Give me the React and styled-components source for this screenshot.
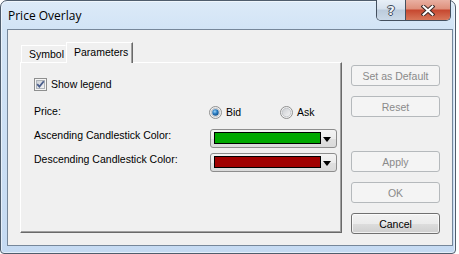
import React from "react";
import styled, { createGlobalStyle } from "styled-components";

const GlobalStyle = createGlobalStyle`
  html, body { margin: 0; padding: 0; background: #fff; }
  body {
    width: 459px;
    height: 254px;
    overflow: hidden;
    font-family: "Liberation Sans", Arial, sans-serif;
  }
`;

// 창 틀
const Window = styled.div`
  width: 456px;
  height: 254px;
  box-sizing: border-box;
  display: flex;
  flex-direction: column;
  padding: 0 2px 7px 6px;
  border: 1px solid #4f5d6d;
  border-radius: 7px 7px 4px 4px;
  background: linear-gradient(to bottom, #dceaf8 0, #d2e4f6 28px, #c5daf2 100%);
  box-shadow: inset 0 0 0 1px rgba(255, 255, 255, 0.55);
`;
const TitleBar = styled.div`
  height: 28px;
  display: flex;
  justify-content: space-between;
  align-items: flex-start;
`;
const Title = styled.div`
  padding: 7px 0 0 1px;
  font-family: "Open Sans", "Noto Sans", sans-serif;
  font-size: 12px;
  line-height: 16px;
  color: #000;
`;
const CaptionGroup = styled.div`
  display: flex;
  margin: -1px 2px 0 0;
  height: 20px;
  border: 1px solid #44505f;
  border-top: none;
  border-radius: 0 0 5px 5px;
  overflow: hidden;
`;
const CaptionButton = styled.div`
  width: ${({ $w }) => $w}px;
  display: flex;
  align-items: center;
  justify-content: center;
  background: ${({ $close }) =>
    $close
      ? "linear-gradient(to bottom, #e9b0a2 0, #de8f7b 45%, #c6472f 50%, #d8775a 100%)"
      : "linear-gradient(to bottom, #e8eff7 0, #d6e1ed 45%, #bccbdc 50%, #cbd9e8 100%)"};
  & + & {
    border-left: 1px solid #44505f;
  }
`;
const HelpGlyph = styled.span`
  font-family: "DejaVu Sans", sans-serif;
  font-weight: bold;
  font-size: 13px;
  line-height: 13px;
  color: #eef2f7;
  text-shadow: 1px 0 0 #3e4a5a, -1px 0 0 #3e4a5a, 0 1px 0 #3e4a5a, 0 -1px 0 #3e4a5a;
`;

// 본문
const Client = styled.div`
  height: 217px;
  box-sizing: border-box;
  display: flex;
  gap: 9px;
  padding: 12px 12px 0 12px;
  border: 1px solid #76879a;
  background: #f0f0f0;
  font-size: 10.5px;
  color: #000;
`;
const TabControl = styled.div`
  width: 322px;
  display: flex;
  flex-direction: column;
`;
const TabStrip = styled.div`
  height: 20px;
  display: flex;
  align-items: flex-start;
  padding-left: 1px;
  position: relative;
  z-index: 1;
`;
const Tab = styled.div`
  width: ${({ $w }) => $w}px;
  height: ${({ $active }) => ($active ? 21 : 17)}px;
  margin-top: ${({ $active }) => ($active ? 0 : 3)}px;
  box-sizing: border-box;
  padding-left: 7px;
  line-height: ${({ $active }) => ($active ? 19 : 16)}px;
  background: #f0f0f0;
  border-top: 1px solid #fff;
  border-left: 1px solid #fff;
  border-right: 1px solid ${({ $active }) => ($active ? "#696969" : "transparent")};
  box-shadow: ${({ $active }) => ($active ? "inset -1px 0 0 #a0a0a0" : "none")};
`;
const Panel = styled.div`
  height: 171px;
  box-sizing: border-box;
  display: flex;
  flex-direction: column;
  padding: 15px 0 0 13px;
  border-top: 1px solid #fff;
  border-left: 1px solid #fff;
  border-right: 1px solid #696969;
  border-bottom: 1px solid #696969;
  box-shadow: inset -1px -1px 0 #a0a0a0;
`;
const Row = styled.div`
  display: grid;
  grid-template-columns: 175px auto;
  align-items: start;
  margin-top: ${({ $gap }) => $gap || 0}px;
`;
const Label = styled.div`
  line-height: 13px;
  white-space: nowrap;
`;
const Check = styled.label`
  grid-column: 1 / 3;
  display: flex;
  align-items: center;
  gap: 4px;
  line-height: 13px;
`;
const Radios = styled.div`
  display: flex;
  padding-top: 1px;
`;
const RadioItem = styled.div`
  width: ${({ $w }) => $w}px;
  display: flex;
  align-items: center;
  gap: 4px;
  line-height: 13px;
`;
const ColorSelect = styled.div`
  width: 127px;
  height: 19px;
  margin-left: 1px;
  box-sizing: border-box;
  display: flex;
  align-items: flex-start;
  padding: 2px 0 0 3px;
  border: 1px solid #8d8d8d;
  border-radius: 3px;
  background: linear-gradient(to bottom, #f4f4f4 0, #ececec 50%, #e0e0e0 51%, #dadada 100%);
`;
const Swatch = styled.div`
  width: 107px;
  height: 12px;
  box-sizing: border-box;
  border: 1px solid #000;
  background: ${({ $color }) => $color};
`;
const Arrow = styled.div`
  margin: 5px 0 0 2px;
  width: 0;
  height: 0;
  border-left: 4.5px solid transparent;
  border-right: 4.5px solid transparent;
  border-top: 5px solid #000;
`;
const ButtonColumn = styled.div`
  width: 89px;
  display: flex;
  flex-direction: column;
  padding-top: 23px;
`;
const Button = styled.div`
  height: 21px;
  box-sizing: border-box;
  margin-top: ${({ $gap }) => $gap || 0}px;
  display: flex;
  align-items: center;
  justify-content: center;
  border-radius: 3px;
  border: 1px solid ${({ $disabled }) => ($disabled ? "#b5b9bc" : "#707070")};
  color: ${({ $disabled }) => ($disabled ? "#8a8a8a" : "#000")};
  background: ${({ $disabled }) =>
    $disabled
      ? "#f4f4f4"
      : "linear-gradient(to bottom, #f2f2f2 0, #ebebeb 50%, #dddddd 51%, #cfcfcf 100%)"};
  box-shadow: ${({ $disabled }) => ($disabled ? "none" : "inset 0 0 0 1px rgba(255,255,255,0.7)")};
`;

const CheckBox = () => (
  <svg width="13" height="13" viewBox="0 0 13 13">
    <defs>
      <linearGradient id="cbg" x1="0" y1="0" x2="1" y2="1">
        <stop offset="0" stopColor="#cbcfd5" />
        <stop offset="1" stopColor="#f6f6f6" />
      </linearGradient>
    </defs>
    <rect x="0.5" y="0.5" width="12" height="12" fill="#f4f4f4" stroke="#8e8f8f" />
    <rect x="2.5" y="2.5" width="8" height="8" fill="url(#cbg)" stroke="#aeb3b9" />
    <path d="M3.2 6.2 L5.4 8.6 L9.8 3.2" fill="none" stroke="#4a5e8c" strokeWidth="1.8" />
  </svg>
);

const Radio = ({ checked }) => (
  <svg width="13" height="13" viewBox="0 0 13 13">
    <defs>
      <linearGradient id="rbg" x1="0" y1="0" x2="1" y2="1">
        <stop offset="0" stopColor="#c9ccd0" />
        <stop offset="1" stopColor="#f7f7f7" />
      </linearGradient>
      <radialGradient id="rdot" cx="0.4" cy="0.35" r="0.7">
        <stop offset="0" stopColor="#9fd5f7" />
        <stop offset="0.5" stopColor="#2a7cc2" />
        <stop offset="1" stopColor="#164f86" />
      </radialGradient>
    </defs>
    <circle cx="6.5" cy="6.5" r="6" fill="#f4f4f4" stroke="#8e8f8f" />
    <circle cx="6.5" cy="6.5" r="4.3" fill="url(#rbg)" stroke="#b9bdc2" strokeWidth="0.8" />
    {checked && <circle cx="6.5" cy="6.5" r="3.2" fill="url(#rdot)" />}
  </svg>
);

const CloseGlyph = () => (
  <svg width="14" height="11" viewBox="0 0 14 11">
    <path d="M2.5 1.5 L11.5 9.5 M11.5 1.5 L2.5 9.5" stroke="#3d2a28" strokeWidth="4" strokeLinecap="square" />
    <path d="M2.5 1.5 L11.5 9.5 M11.5 1.5 L2.5 9.5" stroke="#ffffff" strokeWidth="2" strokeLinecap="square" />
  </svg>
);

export default function App() {
  return (
    <>
      <GlobalStyle />
      <Window>
        <TitleBar>
          <Title>Price Overlay</Title>
          <CaptionGroup>
            <CaptionButton $w={28}>
              <HelpGlyph>?</HelpGlyph>
            </CaptionButton>
            <CaptionButton $w={44} $close>
              <CloseGlyph />
            </CaptionButton>
          </CaptionGroup>
        </TitleBar>
        <Client>
          <TabControl>
            <TabStrip>
              <Tab $w={45}>Symbol</Tab>
              <Tab $w={67} $active>Parameters</Tab>
            </TabStrip>
            <Panel>
              <Row>
                <Check>
                  <CheckBox />
                  Show legend
                </Check>
              </Row>
              <Row $gap={14}>
                <Label>Price:</Label>
                <Radios>
                  <RadioItem $w={71}>
                    <Radio checked />
                    Bid
                  </RadioItem>
                  <RadioItem $w={40}>
                    <Radio />
                    Ask
                  </RadioItem>
                </Radios>
              </Row>
              <Row $gap={10}>
                <Label>Ascending Candlestick Color:</Label>
                <ColorSelect>
                  <Swatch $color="#00a800" />
                  <Arrow />
                </ColorSelect>
              </Row>
              <Row $gap={5}>
                <Label>Descending Candlestick Color:</Label>
                <ColorSelect>
                  <Swatch $color="#a00000" />
                  <Arrow />
                </ColorSelect>
              </Row>
            </Panel>
          </TabControl>
          <ButtonColumn>
            <Button $disabled>Set as Default</Button>
            <Button $disabled $gap={10}>Reset</Button>
            <Button $disabled $gap={34}>Apply</Button>
            <Button $disabled $gap={10}>OK</Button>
            <Button $gap={10}>Cancel</Button>
          </ButtonColumn>
        </Client>
      </Window>
    </>
  );
}
